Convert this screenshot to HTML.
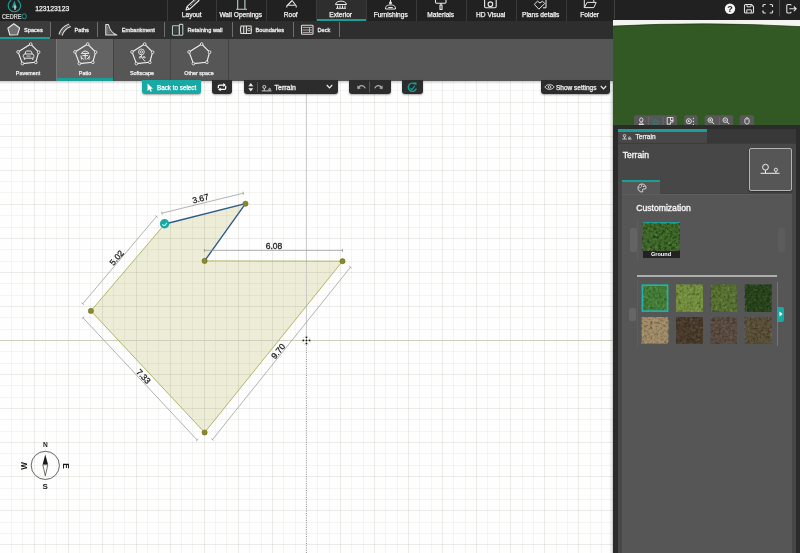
<!DOCTYPE html>
<html><head><meta charset="utf-8">
<style>
*{box-sizing:border-box;margin:0;padding:0}
html,body{width:800px;height:553px;overflow:hidden;background:#fff;font-family:"Liberation Sans",sans-serif}
.abs{position:absolute}
#wrap{position:absolute;left:0;top:0;width:800px;height:553px;will-change:transform}
#top{left:0;top:0;width:800px;height:21px;background:#212121}
#sub{left:0;top:21px;width:613px;height:18px;background:#2e2e2e}
#ico{left:0;top:39px;width:613px;height:41.8px;background:#565656}
#canvas{left:0;top:81px;width:613px;height:472px;background:#fdfdfd;overflow:hidden}
#right{left:613px;top:20px;width:187px;height:533px;background:#3c3c3c}
.nav{position:absolute;top:0;height:21px;width:50px;border-left:1px solid #3a3a3a;color:#f2f2f2;font-size:6.6px;text-align:center;-webkit-text-stroke:.25px #f2f2f2}
.nav span{position:absolute;left:-1.6px;right:0;top:9.8px;line-height:9px;white-space:nowrap}
.nav svg{position:absolute;left:19px;top:0}
.stab{position:absolute;top:0;height:18px;color:#ececec;font-size:5.65px;line-height:18px;white-space:nowrap;-webkit-text-stroke:.3px #ececec}
.ssep{position:absolute;top:1px;width:1px;height:15px;background:#6e6e6e}
.itm{position:absolute;top:0;height:41.8px;width:56px;color:#f2f2f2;font-size:5.4px;text-align:center;-webkit-text-stroke:.25px #f2f2f2}
.itm span{position:absolute;left:0;right:0;top:29.5px;line-height:9px;white-space:nowrap}
.btn{position:absolute;top:0;height:14px;background:#2c2c2c;border-radius:0 0 3px 3px;box-shadow:0 1px 2px rgba(0,0,0,.35)}
</style></head><body><div id="wrap">
<div id="top" class="abs">
 <svg class="abs" style="left:0;top:0" width="30" height="21" viewBox="0 0 30 21">
  <path d="M11.2 0.2 A6.2 6.2 0 1 0 17.6 0.2" fill="none" stroke="#1aa39b" stroke-width="1.1"/>
  <path d="M14.4 0.5 L11.8 7.8 L17 7.8 Z" fill="#1d9d94"/>
  <path d="M15 5.5 L15 9.8" stroke="#e6e6e6" stroke-width="1.3"/>
  <text x="2.1" y="18.9" font-size="7.2" fill="#e0e0e0" font-family="Liberation Sans" textLength="19.2" lengthAdjust="spacingAndGlyphs" stroke="#e0e0e0" stroke-width=".2">CEDRE</text>
  <ellipse cx="24.2" cy="16.3" rx="2.2" ry="2.5" fill="none" stroke="#1a9a90" stroke-width="1"/>
 </svg>
 <div class="abs" style="left:35.2px;top:3.7px;font-size:6.8px;line-height:10px;color:#f2f2f2;-webkit-text-stroke:.25px #f2f2f2">123123123</div>
 <div class="nav" style="left:167px"><span>Layout</span></div>
 <div class="nav" style="left:216px"><span>Wall Openings</span></div>
 <div class="nav" style="left:266px"><span>Roof</span></div>
 <div class="nav" style="left:316px;background:#2e2e2e"><span>Exterior</span><div class="abs" style="left:0;top:19px;width:50px;height:1.5px;background:#1b9e97"></div></div>
 <div class="nav" style="left:366px"><span>Furnishings</span></div>
 <div class="nav" style="left:416px"><span>Materials</span></div>
 <div class="nav" style="left:466px"><span>HD Visual</span></div>
 <div class="nav" style="left:516px"><span>Plans details</span></div>
 <div class="nav" style="left:566px;width:48px"><span>Folder</span></div>
 <svg class="abs" style="left:0;top:0" width="613" height="12" viewBox="0 0 613 12">
 <g fill="none" stroke="#e8e8e8" stroke-width="1.1" stroke-linejoin="round">
  <path d="M186 10 L187 6.6 L196.6 -2.1 L199 0.5 L189.4 9.3 Z M187 6.6 L189.4 9.3"/>
  <path d="M190 6 L197.5 -1" stroke-dasharray="0.9 0.9" stroke-width=".8"/>
  <path d="M237.7 -1 V9.2 M244.9 -1 V9.2 M236.2 9.3 H247" stroke="#b8d4d2"/>
  <path d="M292.2 0.5 L286.8 6 L286.8 7.6 M292.2 0.5 L296.2 6 L296.2 7.6 M288.6 5.2 H294.8"/>
  <path d="M335.5 4.5 C336 0 346 0 346.5 4.5 Z M336 8.3 H346 M337.5 5.5 V8 M340 5.5 V8 M342.5 5.5 V8 M345 5.5 V8" stroke-width="1"/>
  <path d="M385.5 9 C385.5 5.5 387.5 5 390.5 5 C393.5 5 395.5 5.5 395.5 9 Z M390.5 -1 V3.5 M388.2 7.5 H392.8" stroke-width="1"/>
  <circle cx="390.5" cy="3" r=".9" fill="#e8e8e8"/>
  <path d="M435.5 -1 V2.3 Q435.5 3.2 436.5 3.2 H445 Q446 3.2 446 2.3 V-1 M441 3.2 V5 M440 5 H442 V9.5 H440 Z" stroke-width="1.1"/>
  <rect x="484.6" y="-1" width="11.6" height="8.8" rx="1.2"/>
  <circle cx="490.4" cy="4.2" r="2.3"/>
  <path d="M534.3 4.3 L537.5 1.2 L540 3 L542.5 1.2 L544.8 3.5 L538.8 9.2 Z M542.3 -1 H546 V7.8 H543" stroke-width="1"/>
  <path d="M584.3 -1 V7.6 H593.8 L596.2 2.4 H587.2 L584.3 7.6 M593.8 2.4 V-1" stroke-width="1"/>
 </g>
</svg>
<div class="abs" style="left:614px;top:0;width:1px;height:19px;background:#444"></div>
 <svg class="abs" style="left:720px;top:0" width="80" height="20" viewBox="720 0 80 20">
  <circle cx="730" cy="8.8" r="5.2" fill="#f4f4f4"/>
  <text x="730" y="12" font-size="9" font-weight="bold" text-anchor="middle" fill="#1e1e1e" font-family="Liberation Sans">?</text>
  <path d="M745.5 4.5 H751.5 L753.5 6.5 V12 Q753.5 13 752.5 13 H745.5 Q744.5 13 744.5 12 V5.5 Q744.5 4.5 745.5 4.5 Z" fill="none" stroke="#e2e2e2" stroke-width="1.1"/>
  <path d="M747 4.5 V6.8 H751 V4.5 M746.8 13 V9.8 H751.3 V13" fill="none" stroke="#e2e2e2" stroke-width="1"/>
  <path d="M763 7 V5.5 Q763 4.5 764 4.5 H765.8 M769.7 4.5 H771.5 Q772.5 4.5 772.5 5.5 V7 M772.5 10.5 V12 Q772.5 13 771.5 13 H769.7 M765.8 13 H764 Q763 13 763 12 V10.5" fill="none" stroke="#e2e2e2" stroke-width="1.2"/>
  <path d="M779.5 0 V16.5" stroke="#4a4a4a" stroke-width="1"/>
  <path d="M791 5.6 V5.3 Q791 4.5 790 4.5 H787.8 Q786.8 4.5 786.8 5.5 V12 Q786.8 13 787.8 13 H790 Q791 13 791 12 V11.8 M789.3 8.8 H796 M793.8 6.5 L796.2 8.8 L793.8 11.1" fill="none" stroke="#e2e2e2" stroke-width="1.1"/>
 </svg>
</div>
<div id="sub" class="abs">
 <div class="abs" style="left:0;top:0;width:50px;height:18px;background:#3b3b3b"></div>
 <div class="abs" style="left:0;top:15.6px;width:50px;height:2.4px;background:#1b9e97"></div>
  <div class="stab" style="left:24px;">Spaces</div>
 <div class="ssep" style="left:49.5px"></div>
  <div class="stab" style="left:74.5px;">Paths</div>
 <div class="ssep" style="left:97px"></div>
  <div class="stab" style="left:121.7px;">Embankment</div>
 <div class="ssep" style="left:163.5px"></div>
  <div class="stab" style="left:187.5px;">Retaining wall</div>
 <div class="ssep" style="left:231.5px"></div>
  <div class="stab" style="left:255.5px;">Boundaries</div>
 <div class="ssep" style="left:292.5px"></div>
  <div class="stab" style="left:317.5px;">Deck</div>
 <div class="ssep" style="left:339px"></div>
<svg class="abs" style="left:0;top:0" width="613" height="18" viewBox="0 21 613 18">
 <path d="M13.8 23.8 L19.6 28 L17.5 34.8 L9.9 35 L7.9 28.3 Z" fill="#707070" stroke="#eaeaea" stroke-width="1.1" stroke-linejoin="round"/>
 <g fill="none" stroke="#d8d8d8" stroke-linecap="round">
  <path d="M59.2 34 C60.5 29.5 64 26 68.6 24.2" stroke-width="1.2"/>
  <path d="M62.3 35.2 C63.5 31 66.5 28 70.3 26.6" stroke-width="1.2"/>
  <path d="M60.8 34.6 C62 30.3 65.3 27 69.5 25.4" stroke-width=".7" stroke-dasharray="1 1" stroke="#999"/>
 </g>
 <path d="M105.8 24.5 L108.4 24.5 C109.5 29.5 111.5 33 116.8 35 L105.8 35 Z" fill="#5a5a5a" stroke="#e0e0e0" stroke-width="1.1" stroke-linejoin="round"/>
 <path d="M107.5 27 L107.5 33.5 M109 30 L109 33.5" stroke="#999" stroke-width=".7" stroke-dasharray="1 .8"/>
 <g fill="none" stroke="#b6ccc8" stroke-width="1.1">
  <rect x="172.5" y="25.8" width="6.8" height="9.4" rx=".6"/>
  <rect x="179.4" y="24.4" width="3.4" height="10.8" rx=".6"/>
  <path d="M175 27.5 V33.5 M177 27.5 V33.5" stroke="#777" stroke-width=".8" stroke-dasharray="1 1"/>
 </g>
 <g fill="none" stroke="#e2e2dc" stroke-width="1.1">
  <path d="M241 26 Q240 29.5 241 33.5 L251 33.5 Q251.8 29.5 251 26 Z"/>
  <path d="M243.7 26 V33.5 M246.4 26 V33.5" stroke="#ddd"/>
  <circle cx="249" cy="29.7" r="1.3" stroke-width=".8"/>
 </g>
 <g fill="none" stroke="#ddd" stroke-width="1.1">
  <rect x="301.5" y="25.3" width="11.5" height="9" rx=".8"/>
  <path d="M302.5 27.4 H312 M302.5 30 H312 M302.5 32.4 H312 M309.5 27.4 V32.4" stroke-width=".9" stroke="#c9b9bf"/>
 </g>
</svg>

</div>
<div id="ico" class="abs">
 <div class="itm" style="left:0;background:#4f4f4f"><span>Pavement</span></div>
 <div class="abs" style="left:56px;top:0;width:1px;height:41.8px;background:#777"></div>
 <div class="itm" style="left:57px;background:#636363"><span>Patio</span><div class="abs" style="left:0;top:39.3px;width:56px;height:2.5px;background:#1b9e97"></div></div>
 <div class="abs" style="left:113px;top:0;width:1px;height:41.8px;background:#444"></div>
 <div class="itm" style="left:114px;background:#565656"><span>Softscape</span></div>
 <div class="abs" style="left:170px;top:0;width:1px;height:41.8px;background:#444"></div>
 <div class="itm" style="left:171px;background:#565656"><span>Other space</span></div>
 <div class="abs" style="left:227.5px;top:0;width:1px;height:41.8px;background:#444"></div>
<svg class="abs" style="left:0;top:0" width="613" height="41" viewBox="0 39 613 41"><polygon points="30.70,44.10 38.60,52.20 35.80,62.30 22.40,63.60 18.05,51.90" fill="none" stroke="#f0f0f0" stroke-width="1.15" stroke-linejoin="round"/><g fill="#4f4f4f" stroke="#f0f0f0" stroke-width=".85"><circle cx="30.70" cy="44.10" r="1.35"/><circle cx="38.60" cy="52.20" r="1.35"/><circle cx="35.80" cy="62.30" r="1.35"/><circle cx="22.40" cy="63.60" r="1.35"/><circle cx="18.05" cy="51.90" r="1.35"/></g><polygon points="87.70,44.10 95.60,52.20 92.80,62.30 79.40,63.60 75.05,51.90" fill="none" stroke="#f0f0f0" stroke-width="1.15" stroke-linejoin="round"/><g fill="#636363" stroke="#f0f0f0" stroke-width=".85"><circle cx="87.70" cy="44.10" r="1.35"/><circle cx="95.60" cy="52.20" r="1.35"/><circle cx="92.80" cy="62.30" r="1.35"/><circle cx="79.40" cy="63.60" r="1.35"/><circle cx="75.05" cy="51.90" r="1.35"/></g><polygon points="144.70,44.10 152.60,52.20 149.80,62.30 136.40,63.60 132.05,51.90" fill="none" stroke="#f0f0f0" stroke-width="1.15" stroke-linejoin="round"/><g fill="#565656" stroke="#f0f0f0" stroke-width=".85"><circle cx="144.70" cy="44.10" r="1.35"/><circle cx="152.60" cy="52.20" r="1.35"/><circle cx="149.80" cy="62.30" r="1.35"/><circle cx="136.40" cy="63.60" r="1.35"/><circle cx="132.05" cy="51.90" r="1.35"/></g><polygon points="201.70,44.10 209.60,52.20 206.80,62.30 193.40,63.60 189.05,51.90" fill="none" stroke="#f0f0f0" stroke-width="1.15" stroke-linejoin="round"/><g fill="#565656" stroke="#f0f0f0" stroke-width=".85"><circle cx="201.70" cy="44.10" r="1.35"/><circle cx="209.60" cy="52.20" r="1.35"/><circle cx="206.80" cy="62.30" r="1.35"/><circle cx="193.40" cy="63.60" r="1.35"/><circle cx="189.05" cy="51.90" r="1.35"/></g><g fill="none" stroke="#e8e8e8" stroke-width="1"><path d="M25 54 L25.8 51.6 Q26 51 26.8 51 L30.4 51 Q31.2 51 31.4 51.6 L32.2 54"/><rect x="23.3" y="54" width="10.6" height="4.2" rx="1.8"/><path d="M24.5 58.2 V59.8 M32.7 58.2 V59.8" stroke-width="1.3"/><path d="M26.5 56.1 H30.7" stroke-width=".8"/></g><g fill="none" stroke="#eeeeee" stroke-width="1"><path d="M81.3 53.4 Q85.2 48.6 89.1 53.4 Z"/><path d="M85.2 53.4 V59.5 M82.5 55.6 H88 M81 55.5 L81.5 59.5 M89.4 55.5 L88.9 59.5 M81.5 57.3 L83.8 59.5 M88.9 57.3 L86.6 59.5"/></g><g fill="none" stroke="#e8e8e8" stroke-width=".9"><circle cx="141.4" cy="51.9" r="2.9"/><circle cx="141.4" cy="51.9" r="1.2"/><path d="M141.6 54.8 Q141 57 142.5 58.5 Q144 60 145.2 61.5"/><path d="M141.8 56.8 Q139.5 55.5 139 57.8 Q140.5 58.6 141.8 56.8 Z M142.8 57.2 Q144.8 55.6 145.3 57.6 Q144 58.6 142.8 57.2 Z"/></g></svg>
</div>
<div id="canvas" class="abs"><svg class="abs" style="left:0;top:0" width="613" height="472" viewBox="0 81 613 472"><rect x="0" y="80" width="613" height="473" fill="#fefefe"/><polygon points="164.9,224.0 245.5,203.7 204.6,260.9 342.5,261.2 204.6,432.5 90.9,310.9" fill="#d2cd96" fill-opacity="0.37" stroke="none"/><path d="M11.50 80V553M22.50 80V553M45.50 80V553M56.50 80V553M79.50 80V553M90.50 80V553M113.50 80V553M124.50 80V553M147.50 80V553M158.50 80V553M181.50 80V553M192.50 80V553M215.50 80V553M226.50 80V553M249.50 80V553M261.50 80V553M283.50 80V553M295.50 80V553M317.50 80V553M329.50 80V553M351.50 80V553M363.50 80V553M385.50 80V553M397.50 80V553M419.50 80V553M431.50 80V553M453.50 80V553M465.50 80V553M487.50 80V553M499.50 80V553M522.50 80V553M533.50 80V553M556.50 80V553M567.50 80V553M590.50 80V553M601.50 80V553M0 90.50H613M0 113.50H613M0 124.50H613M0 147.50H613M0 158.50H613M0 181.50H613M0 192.50H613M0 215.50H613M0 227.50H613M0 249.50H613M0 261.50H613M0 283.50H613M0 295.50H613M0 317.50H613M0 329.50H613M0 351.50H613M0 363.50H613M0 385.50H613M0 397.50H613M0 419.50H613M0 431.50H613M0 453.50H613M0 465.50H613M0 488.50H613M0 499.50H613M0 522.50H613M0 533.50H613" stroke="rgba(50,50,20,0.05)" stroke-width="1" fill="none"/><path d="M34.50 80V553M68.50 80V553M102.50 80V553M136.50 80V553M170.50 80V553M204.50 80V553M238.50 80V553M272.50 80V553M340.50 80V553M374.50 80V553M408.50 80V553M442.50 80V553M476.50 80V553M510.50 80V553M544.50 80V553M578.50 80V553M612.50 80V553M0 102.50H613M0 136.50H613M0 170.50H613M0 204.50H613M0 238.50H613M0 272.50H613M0 306.50H613M0 374.50H613M0 408.50H613M0 442.50H613M0 476.50H613M0 510.50H613M0 544.50H613" stroke="rgba(50,50,20,0.095)" stroke-width="1" fill="none"/><path d="M0 340.5H613" stroke="#cfcfbf" stroke-width="1"/><path d="M306.4 80V340.5" stroke="#c8c8c8" stroke-width="1"/><path d="M306.4 340.5V553" stroke="#8a8a8a" stroke-width="1" stroke-dasharray="1 1.3"/><path d="M204.6 260.9L342.5 261.2L204.6 432.5L90.9 310.9L164.9 224.0" fill="none" stroke="#b3b56a" stroke-width="1"/><path d="M164.9 224.0L245.5 203.7L204.6 260.9" fill="none" stroke="#2b5c88" stroke-width="1.35"/><path d="M161.9 213.2L243.3 193.2" stroke="#9a9a9a" stroke-width="0.75"/><path d="M161.54 211.74L162.26 214.66" stroke="#888" stroke-width="0.7"/><path d="M242.94 191.74L243.66 194.66" stroke="#888" stroke-width="0.7"/><text x="0" y="0" transform="translate(200.5,198.5) rotate(-14)" text-anchor="middle" dominant-baseline="central" font-size="8.5" fill="#1e1e1e" stroke="#1e1e1e" stroke-width=".3" font-family="Liberation Sans">3.67</text><path d="M204.4 250.4L342.5 250.4" stroke="#9a9a9a" stroke-width="0.75"/><path d="M204.40 248.90L204.40 251.90" stroke="#888" stroke-width="0.7"/><path d="M342.50 248.90L342.50 251.90" stroke="#888" stroke-width="0.7"/><text x="0" y="0" transform="translate(274,245.8) rotate(0)" text-anchor="middle" dominant-baseline="central" font-size="8.5" fill="#1e1e1e" stroke="#1e1e1e" stroke-width=".3" font-family="Liberation Sans">6.08</text><path d="M350.5 267.2L212.5 439.5" stroke="#9a9a9a" stroke-width="0.75"/><path d="M351.67 268.14L349.33 266.26" stroke="#888" stroke-width="0.7"/><path d="M213.67 440.44L211.33 438.56" stroke="#888" stroke-width="0.7"/><text x="0" y="0" transform="translate(278.2,351.2) rotate(-51)" text-anchor="middle" dominant-baseline="central" font-size="8.5" fill="#1e1e1e" stroke="#1e1e1e" stroke-width=".3" font-family="Liberation Sans">9.70</text><path d="M197.2 440.1L83 317.8" stroke="#9a9a9a" stroke-width="0.75"/><path d="M196.10 441.12L198.30 439.08" stroke="#888" stroke-width="0.7"/><path d="M81.90 318.82L84.10 316.78" stroke="#888" stroke-width="0.7"/><text x="0" y="0" transform="translate(143.5,376.4) rotate(47)" text-anchor="middle" dominant-baseline="central" font-size="8.5" fill="#1e1e1e" stroke="#1e1e1e" stroke-width=".3" font-family="Liberation Sans">7.33</text><path d="M82.7 303.7L156.5 216.5" stroke="#9a9a9a" stroke-width="0.75"/><path d="M81.56 302.73L83.84 304.67" stroke="#888" stroke-width="0.7"/><path d="M155.36 215.53L157.64 217.47" stroke="#888" stroke-width="0.7"/><text x="0" y="0" transform="translate(116.6,257.7) rotate(-50)" text-anchor="middle" dominant-baseline="central" font-size="8.5" fill="#1e1e1e" stroke="#1e1e1e" stroke-width=".3" font-family="Liberation Sans">5.02</text><circle cx="245.5" cy="203.7" r="2.6" fill="#8a8a2a" stroke="#6f7020" stroke-width=".6"/><circle cx="204.6" cy="260.9" r="2.6" fill="#8a8a2a" stroke="#6f7020" stroke-width=".6"/><circle cx="342.5" cy="261.2" r="2.6" fill="#8a8a2a" stroke="#6f7020" stroke-width=".6"/><circle cx="204.6" cy="432.5" r="2.6" fill="#8a8a2a" stroke="#6f7020" stroke-width=".6"/><circle cx="90.9" cy="310.9" r="2.6" fill="#8a8a2a" stroke="#6f7020" stroke-width=".6"/><circle cx="164.6" cy="223.7" r="4.7" fill="#17a8a4"/><path d="M162.3 224.4 Q163.8 226.2 165.2 225.2 L166.8 222.7" fill="none" stroke="#bff" stroke-width="1.1"/><g fill="#111"><circle cx="306.45" cy="340.45" r=".85"/><circle cx="303.4" cy="340.45" r=".9"/><circle cx="309.5" cy="340.45" r=".9"/><circle cx="306.45" cy="337.3" r=".9"/><circle cx="306.45" cy="343.5" r=".9"/></g><circle cx="306.45" cy="340.45" r="4.3" fill="none" stroke="#aaa" stroke-width=".5" stroke-dasharray="1 1"/><circle cx="45.3" cy="465.4" r="14.1" fill="none" stroke="#555" stroke-width="0.9"/><path d="M45.3 454.59999999999997L48.0 464.4L42.599999999999994 464.4Z" fill="#1a1a1a"/><path d="M45.3 475.79999999999995L47.8 464.79999999999995L42.8 464.79999999999995Z" fill="#fff" stroke="#333" stroke-width=".7"/><text x="45.3" y="447.2" text-anchor="middle" font-size="6.6" font-weight="bold" fill="#1a1a1a" font-family="Liberation Sans">N</text><text x="0" y="0" transform="translate(45.199999999999996,488.7)" text-anchor="middle" font-size="8" font-weight="bold" fill="#1a1a1a" font-family="Liberation Sans">S</text><text x="0" y="0" transform="translate(24.799999999999997,466.0) rotate(-90)" text-anchor="middle" dominant-baseline="central" font-size="8.2" font-weight="bold" fill="#1a1a1a" font-family="Liberation Sans">W</text><text x="0" y="0" transform="translate(65.9,465.9) rotate(90)" text-anchor="middle" dominant-baseline="central" font-size="8.2" font-weight="bold" fill="#1a1a1a" font-family="Liberation Sans">E</text></svg></div><div id="redge" class="abs" style="left:609px;top:80px;width:4px;height:473px;background:linear-gradient(90deg,rgba(0,0,0,0),rgba(0,0,0,.14))"></div>
<div class="abs" style="left:0;top:80.8px;width:613px;height:3px;background:linear-gradient(rgba(0,0,0,.2),rgba(0,0,0,0))"></div>
<div class="btn" style="left:142px;top:80px;width:58.5px;background:#18a9a5">
 <svg class="abs" style="left:4px;top:3px" width="8" height="9" viewBox="0 0 8 9"><path d="M1.5 0.5 L1.5 8 L3.3 6.2 L4.6 8.8 L5.8 8.2 L4.6 5.8 L7 5.8 Z" fill="#fff"/></svg>
 <div class="abs" style="left:15px;top:1px;line-height:14px;font-size:6.3px;color:#fff;white-space:nowrap;-webkit-text-stroke:.25px #fff">Back to select</div>
</div>
<div class="btn" style="left:212px;top:80px;width:20px">
 <svg class="abs" style="left:0;top:0" width="20" height="14" viewBox="0 0 20 14"><path d="M6.3 8.2 V6.2 Q6.3 5 7.5 5 H11.8 M13.7 6 V8.2 Q13.7 9.4 12.5 9.4 H8.3" fill="none" stroke="#fff" stroke-width="1.25"/><path d="M11.3 3.1 L13.9 5 L11.3 6.9 Z M8.7 7.5 L6.1 9.4 L8.7 11.3 Z" fill="#fff"/></svg>
</div>
<div class="btn" style="left:244px;top:80px;width:93.5px">
 <svg class="abs" style="left:0;top:2px" width="14" height="10" viewBox="0 0 14 10"><path d="M6.8 1 L9.3 4.3 L4.3 4.3 Z M6.8 9.5 L9.3 6.2 L4.3 6.2 Z" fill="#e8e8e8"/><path d="M13.5 0 L13.5 10" stroke="#555" stroke-width="1"/></svg>
 <svg class="abs" style="left:17px;top:5px" width="12" height="7" viewBox="0 0 12 7"><circle cx="3.3" cy="1.9" r="1.5" fill="none" stroke="#e0e0e0" stroke-width=".9"/><path d="M3.3 3.4 L3.3 5.6 M0.8 5.9 L10.5 5.9" stroke="#e0e0e0" stroke-width=".9"/><circle cx="8.6" cy="4.3" r=".9" fill="none" stroke="#e0e0e0" stroke-width=".8"/></svg>
 <div class="abs" style="left:30.5px;top:0.5px;line-height:14px;font-size:7px;color:#f0f0f0;white-space:nowrap;-webkit-text-stroke:.3px #f0f0f0">Terrain</div>
 <svg class="abs" style="left:82px;top:4px" width="7" height="5" viewBox="0 0 7 5"><path d="M0.8 1 L3.5 3.8 L6.2 1" fill="none" stroke="#eee" stroke-width="1.2"/></svg>
</div>
<div class="btn" style="left:349px;top:80px;width:42px">
 <svg class="abs" style="left:0;top:0" width="42" height="14" viewBox="0 0 42 14"><path d="M9.5 7.5 C11 5 14.5 5 16.3 8.2" fill="none" stroke="#b0b0b0" stroke-width="1.2"/><path d="M8.2 5.6 L8.6 9.2 L11.8 8.2 Z" fill="#b0b0b0"/><path d="M20.5 1.5 L20.5 12.5" stroke="#555" stroke-width="1.1"/><path d="M32.5 7.5 C31 5 27.5 5 25.7 8.2" fill="none" stroke="#b0b0b0" stroke-width="1.2"/><path d="M33.8 5.6 L33.4 9.2 L30.2 8.2 Z" fill="#b0b0b0"/></svg>
</div>
<div class="btn" style="left:402px;top:80px;width:20.5px">
 <svg class="abs" style="left:0;top:0" width="21" height="14" viewBox="0 0 21 14"><path d="M13.2 4.2 A4.1 4.1 0 1 0 14.3 8.6" fill="none" stroke="#1a9c96" stroke-width="1.4"/><path d="M11.6 2.6 L14.6 2.4 L14.3 5.6 Z" fill="#1a9c96"/><path d="M8.5 8.2 L10 9.5 L12.8 5.8" fill="none" stroke="#1a9c96" stroke-width="1.2"/></svg>
</div>
<div class="btn" style="left:541px;top:80px;width:69px">
 <svg class="abs" style="left:3px;top:3px" width="11" height="8" viewBox="0 0 11 8"><path d="M0.8 4 C3 0.8 8 0.8 10.2 4 C8 7.2 3 7.2 0.8 4 Z" fill="none" stroke="#ddd" stroke-width=".9"/><circle cx="5.5" cy="4" r="1.3" fill="none" stroke="#ddd" stroke-width=".9"/></svg>
 <div class="abs" style="left:15px;top:0.5px;line-height:14px;font-size:6.5px;color:#f0f0f0;white-space:nowrap;-webkit-text-stroke:.25px #f0f0f0">Show settings</div>
 <svg class="abs" style="left:59px;top:4.5px" width="7" height="5" viewBox="0 0 7 5"><path d="M0.8 1 L3.5 3.8 L6.2 1" fill="none" stroke="#eee" stroke-width="1.2"/></svg>
</div>
<div id="right" class="abs">
 <svg class="abs" style="left:0;top:0" width="187" height="106" viewBox="613 19 187 106">
  <rect x="613" y="19" width="187" height="106" fill="#325824"/>
  <path d="M613 19 L800 19 L800 25.6 Q706 20.4 613 25.1 Z" fill="#f4f4f0"/>
  <path d="M613 25.1 Q706 20.4 800 25.6" fill="none" stroke="#1d3512" stroke-width=".7"/>
  <g fill="#585858">
   <path d="M634 125 L634 116.2 Q634 114.2 636 114.2 L675 114.2 Q677 114.2 677 116.2 L677 125 Z"/>
   <path d="M684.2 125 L684.2 116.2 Q684.2 114.2 686.2 114.2 L695.7 114.2 Q697.7 114.2 697.7 116.2 L697.7 125 Z"/>
   <path d="M704.7 125 L704.7 116.2 Q704.7 114.2 706.7 114.2 L731.2 114.2 Q733.2 114.2 733.2 116.2 L733.2 125 Z"/>
   <path d="M739.7 125 L739.7 116.2 Q739.7 114.2 741.7 114.2 L752.2 114.2 Q754.2 114.2 754.2 116.2 L754.2 125 Z"/>
  </g>
  <g stroke="#6e6e6e" stroke-width=".8"><path d="M648.6 116 V124 M663.2 116 V124 M719.6 116 V124"/></g>
  <g fill="none" stroke="#e6e6e6" stroke-width=".9">
   <path d="M640.5 121 C639.3 120 639.3 116.8 641.3 116.8 C643.3 116.8 643.3 120 642.1 121 Z M639 123.5 C639.5 121.5 643.1 121.5 643.6 123.5 Z"/>
   <path d="M667.2 116.5 H673 V121 H670.5 V123.2 H667.2 Z M670.5 116.5 V119.5 H673"/>
   <circle cx="688.9" cy="120.2" r="2.5"/><path d="M688 119.6 L689.6 120.8" stroke-width="1.4"/><path d="M693.4 116.8 V118.2 M693.4 119.8 V121.2 M693.4 122.8 V124" stroke-width="1"/>
   <circle cx="710.3" cy="119.1" r="2.3"/><path d="M712 120.9 L714.2 123.1 M709.3 119.1 H711.3 M710.3 118.1 V120.1" stroke-width="1"/>
   <circle cx="725.3" cy="119.1" r="2.3"/><path d="M727 120.9 L729.2 123.1 M724.3 119.1 H726.3" stroke-width="1"/>
   <path d="M744.9 118.8 C744.9 116.3 749.1 116.3 749.1 118.8 L749.1 121.3 C749.1 123.6 744.9 123.6 744.9 121.3 Z M747 116.8 V118.8"/>
  </g>
  <path d="M652.5 121.8 L655.8 118.2 L659.2 121.8 M653.5 121.8 V123 H658.2 V121.8" fill="none" stroke="#1a8a86" stroke-width=".9"/>
 </svg>
 <div class="abs" style="left:0;top:104.8px;width:187px;height:4.4px;background:#2b2b2b"></div>
 <div class="abs" style="left:0;top:109.2px;width:187px;height:14.3px;background:#383838"></div>
 <div class="abs" style="left:0;top:104.8px;width:4.5px;height:429px;background:#2b2b2b"></div>
 <div class="abs" style="left:183px;top:104.8px;width:4px;height:429px;background:#2b2b2b"></div>
 <div class="abs" style="left:4.5px;top:109.2px;width:89px;height:14.3px;background:#474747"></div>
 <div class="abs" style="left:4.5px;top:109.2px;width:89px;height:2.5px;background:#1b9e97"></div>
 <svg class="abs" style="left:9px;top:114px" width="10" height="6" viewBox="0 0 10 6"><circle cx="2.5" cy="1.7" r="1.3" fill="none" stroke="#e6e6e6" stroke-width=".8"/><path d="M2.5 3 L2.5 4.8 M0.3 5 L5 5 M6 5 L9.5 5" stroke="#e6e6e6" stroke-width=".8"/><circle cx="7.5" cy="3.8" r=".9" fill="none" stroke="#e6e6e6" stroke-width=".7"/></svg>
 <div class="abs" style="left:22.5px;top:110.3px;line-height:13px;font-size:6.6px;color:#f0f0f0;white-space:nowrap;-webkit-text-stroke:.25px #f0f0f0">Terrain</div>
 <div class="abs" style="left:4.5px;top:123.5px;width:178.5px;height:410px;background:#474747"></div>
 <div class="abs" style="left:9.7px;top:128.8px;line-height:12px;font-size:8.6px;color:#f4f4f4;white-space:nowrap;-webkit-text-stroke:.35px #f4f4f4">Terrain</div>
 <div class="abs" style="left:136px;top:128px;width:42.7px;height:42.5px;background:#565656;border:1.6px solid #b5b5b5;border-radius:2px;box-shadow:0 1px 2px rgba(0,0,0,.4)"></div>
 <svg class="abs" style="left:146px;top:142px" width="22" height="14" viewBox="146 142 22 14"><circle cx="152.5" cy="147.2" r="2.9" fill="none" stroke="#f0f0f0" stroke-width="1"/><path d="M152.5 150.1 V153 M147.6 153.3 H166.6" stroke="#f0f0f0" stroke-width="1"/><circle cx="162.9" cy="149.8" r="1.6" fill="none" stroke="#f0f0f0" stroke-width=".9"/><path d="M162.9 151.4 V153"  stroke="#f0f0f0" stroke-width=".9"/></svg>
 <div class="abs" style="left:9px;top:159.9px;width:38px;height:15px;background:#565656"></div>
 <div class="abs" style="left:9px;top:159.9px;width:38px;height:2.2px;background:#1b9e97"></div>
 <svg class="abs" style="left:23.8px;top:162.7px" width="10" height="10" viewBox="0 0 10 10"><path d="M5 1 C2 1 1 3.5 1 5 C1 7.5 3 9 5 9 C6 9 6 8 5.5 7.5 C5 7 5.5 6 6.5 6 L8 6 C9 6 9 5 9 4.5 C9 2.5 7 1 5 1 Z" fill="none" stroke="#eee" stroke-width=".9"/><circle cx="3" cy="4.6" r=".7" fill="#eee"/><circle cx="4.6" cy="2.9" r=".7" fill="#eee"/><circle cx="6.8" cy="3.4" r=".7" fill="#eee"/></svg>
 <div class="abs" style="left:9px;top:174.3px;width:169.7px;height:360px;background:#565656;border-top:1px solid #5e5e5e"></div><div class="abs" style="left:47px;top:173.3px;width:131.7px;height:1px;background:#434343"></div>
 <div class="abs" style="left:23.3px;top:181.8px;line-height:12px;font-size:8.6px;color:#f4f4f4;white-space:nowrap;-webkit-text-stroke:.35px #f4f4f4">Customization</div>
 <div class="abs" style="left:16.5px;top:208px;width:7px;height:24px;background:#636363;border-radius:2px"></div>
 <div class="abs" style="left:23.7px;top:199px;width:1px;height:42px;background:#5e5e5e"></div>
 <div class="abs" style="left:164.5px;top:208px;width:7px;height:24px;background:#5c5c5c;border-radius:2px"></div>
 <div class="abs" style="left:29.5px;top:202px;width:37px;height:1.6px;background:#1b9e97"></div>
 
 <div class="abs" style="left:29.5px;top:230.5px;width:37px;height:7.5px;background:#222;color:#fff;font-size:5.6px;line-height:7.5px;text-align:center;font-weight:bold">Ground</div>
 <div class="abs" style="left:23.7px;top:255px;width:140.8px;height:1.8px;background:#aeaeae"></div>
 <div class="abs" style="left:23.5px;top:261px;width:1px;height:66px;background:#5e5e5e"></div>
 <div class="abs" style="left:16.3px;top:287.6px;width:6.8px;height:13.7px;background:#666;border-radius:2px"></div>
 <div class="abs" style="left:164.4px;top:261.5px;width:1px;height:64.5px;background:#1b9e97"></div>
 <div class="abs" style="left:164.4px;top:287px;width:6.6px;height:14.6px;background:#17aaa5;border-radius:0 2px 2px 0"></div>
 <svg class="abs" style="left:166px;top:291px" width="4" height="6" viewBox="0 0 4 6"><path d="M0.5 0.5 L3.5 3 L0.5 5.5 Z" fill="#fff"/></svg>
 <svg class="abs" style="left:0;top:-1px" width="187" height="533" viewBox="0 0 187 533">
<defs><filter id="nd" x="0" y="0" width="100%" height="100%"><feTurbulence type="fractalNoise" baseFrequency="0.35" numOctaves="3" seed="4"/><feColorMatrix type="matrix" values="0 0 0 0 0  0 0 0 0 0  0 0 0 0 0  2.2 0 0 0 -0.95"/></filter>
<filter id="nl" x="0" y="0" width="100%" height="100%"><feTurbulence type="fractalNoise" baseFrequency="0.4" numOctaves="3" seed="9"/><feColorMatrix type="matrix" values="0 0 0 0 1  0 0 0 0 1  0 0 0 0 1  2.2 0 0 0 -1.15"/></filter></defs>
<rect x="29.5" y="204.6" width="37" height="27" fill="#3d6a26"/><rect x="29.5" y="204.6" width="37" height="27" filter="url(#nd)" opacity=".55"/><rect x="29.5" y="204.6" width="37" height="27" filter="url(#nl)" opacity=".25"/>
<rect x="28.6" y="265.4" width="26.8" height="27.5" fill="#457f37"/><rect x="28.6" y="265.4" width="26.8" height="27.5" filter="url(#nd)" opacity=".35"/><rect x="28.6" y="265.4" width="26.8" height="27.5" filter="url(#nl)" opacity=".2"/>
<rect x="63" y="265.4" width="27" height="27.5" fill="#76923f"/><rect x="63" y="265.4" width="27" height="27.5" filter="url(#nd)" opacity=".35"/><rect x="63" y="265.4" width="27" height="27.5" filter="url(#nl)" opacity=".2"/>
<rect x="97.9" y="265.4" width="26" height="27.5" fill="#587331"/><rect x="97.9" y="265.4" width="26" height="27.5" filter="url(#nd)" opacity=".35"/><rect x="97.9" y="265.4" width="26" height="27.5" filter="url(#nl)" opacity=".2"/>
<rect x="131.9" y="265.4" width="26.7" height="27.5" fill="#27441a"/><rect x="131.9" y="265.4" width="26.7" height="27.5" filter="url(#nd)" opacity=".35"/><rect x="131.9" y="265.4" width="26.7" height="27.5" filter="url(#nl)" opacity=".2"/>
<rect x="28.6" y="298" width="26.8" height="26.7" fill="#a38e69"/><rect x="28.6" y="298" width="26.8" height="26.7" filter="url(#nd)" opacity=".35"/><rect x="28.6" y="298" width="26.8" height="26.7" filter="url(#nl)" opacity=".2"/>
<rect x="63" y="298" width="27" height="26.7" fill="#4a3b2b"/><rect x="63" y="298" width="27" height="26.7" filter="url(#nd)" opacity=".35"/><rect x="63" y="298" width="27" height="26.7" filter="url(#nl)" opacity=".2"/>
<rect x="97.9" y="298" width="26" height="26.7" fill="#5b4b40"/><rect x="97.9" y="298" width="26" height="26.7" filter="url(#nd)" opacity=".35"/><rect x="97.9" y="298" width="26" height="26.7" filter="url(#nl)" opacity=".2"/>
<rect x="131.9" y="298" width="26.7" height="26.7" fill="#5a5036"/><rect x="131.9" y="298" width="26.7" height="26.7" filter="url(#nd)" opacity=".35"/><rect x="131.9" y="298" width="26.7" height="26.7" filter="url(#nl)" opacity=".2"/>
<rect x="29.4" y="266.2" width="25.2" height="25.9" fill="none" stroke="#21b3ad" stroke-width="1.6"/>
</svg>
</div>

</div></body></html>
